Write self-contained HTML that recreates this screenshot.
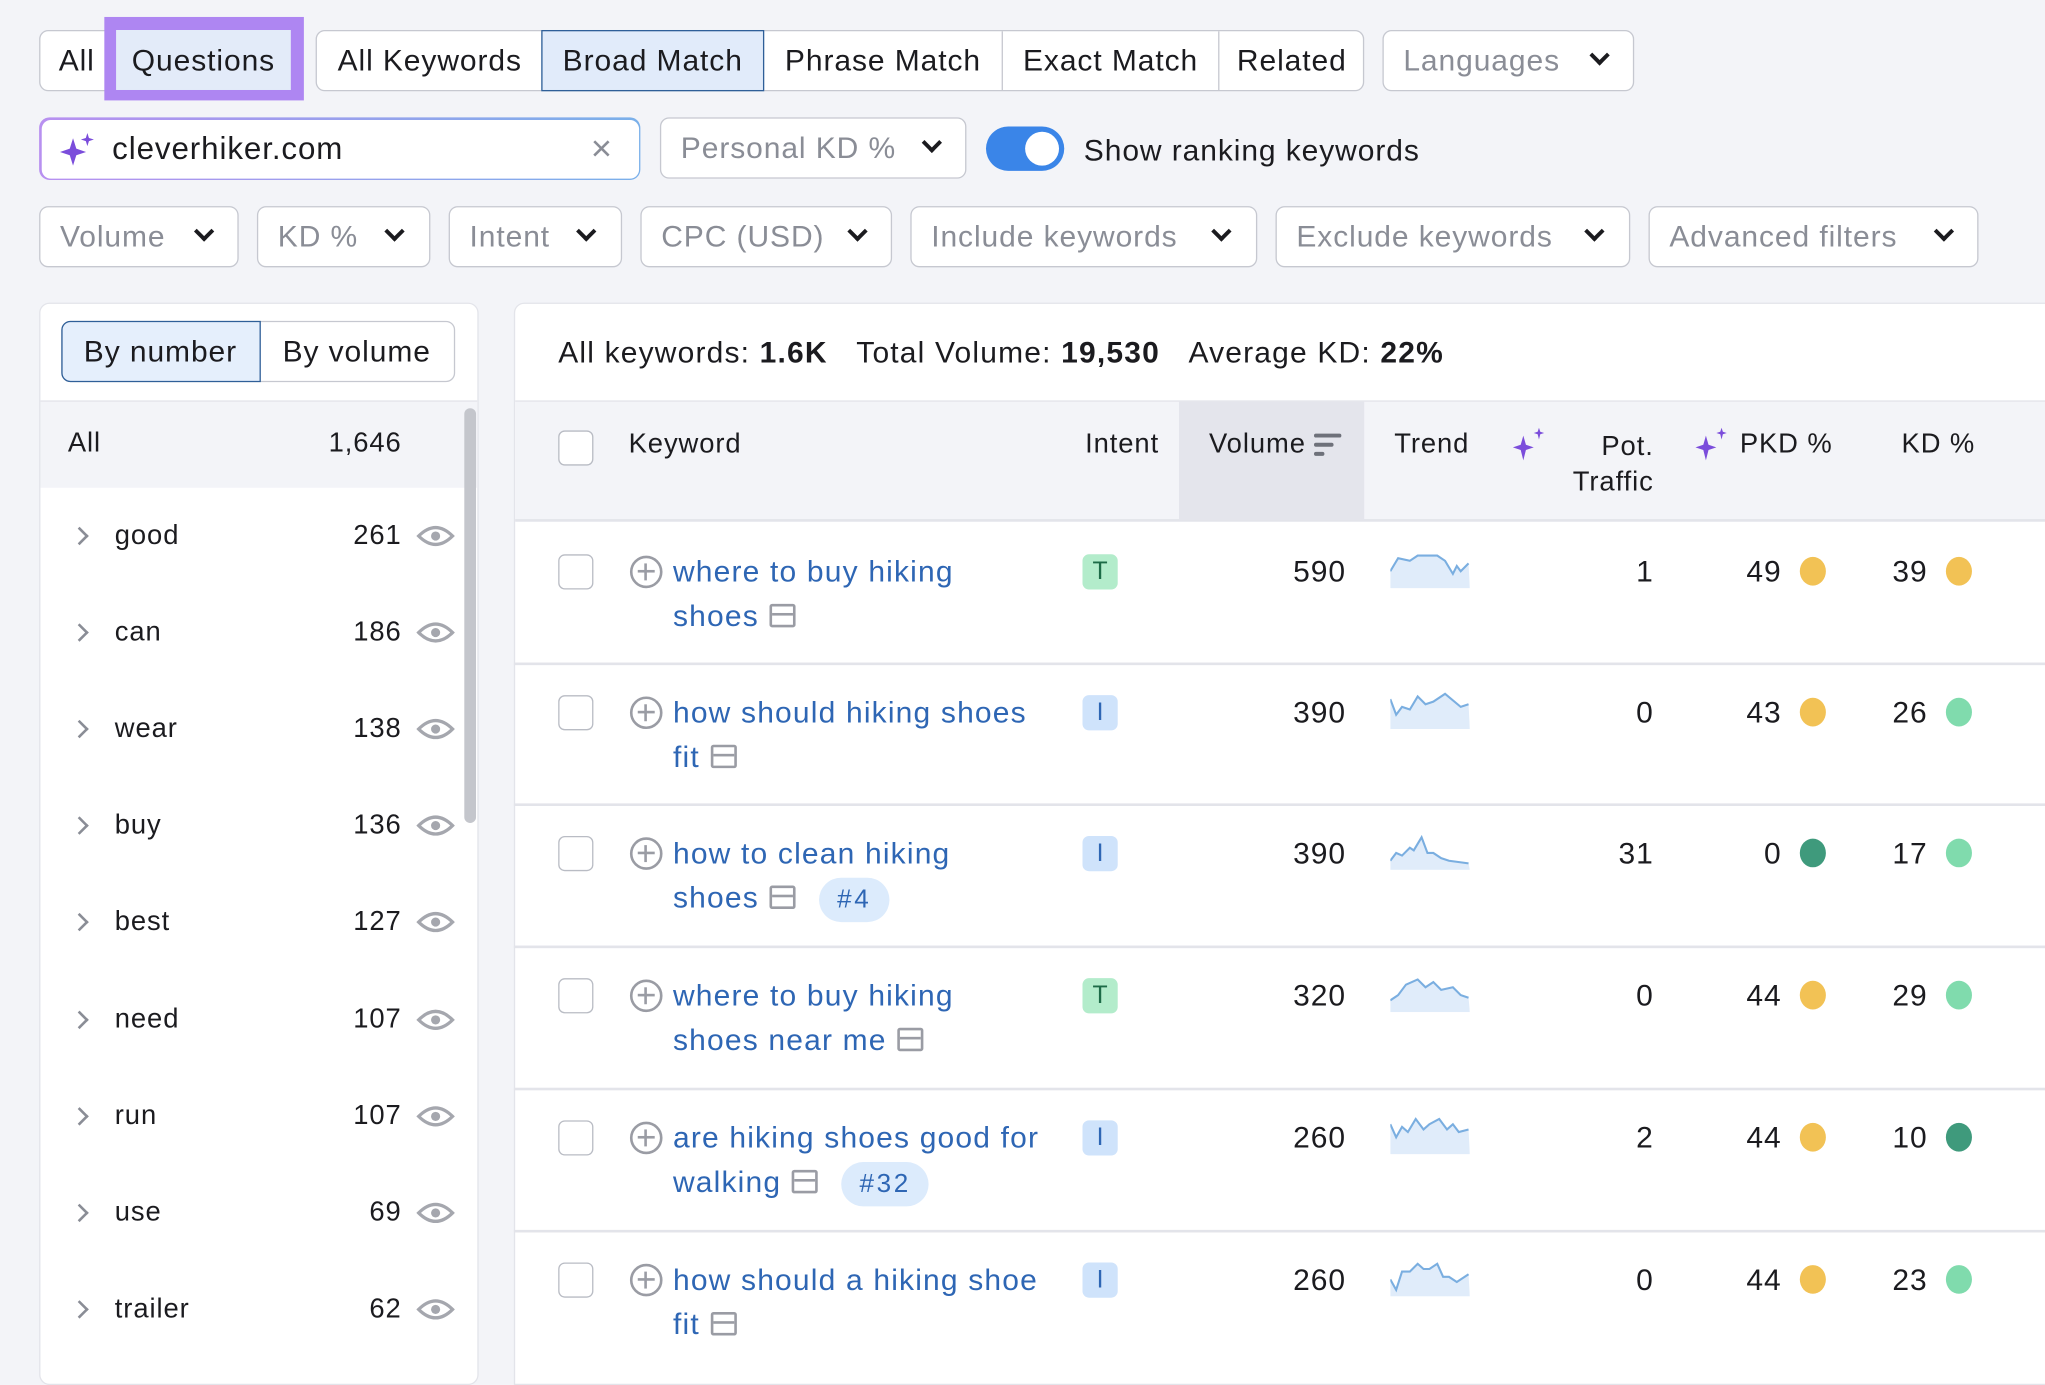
<!DOCTYPE html>
<html><head><meta charset="utf-8">
<style>
*{box-sizing:border-box;margin:0;padding:0}
html,body{width:2045px;height:1368px;overflow:hidden;background:#f3f4f8}
#w{position:absolute;left:0;top:0;width:1568px;height:1049px;transform:scale(1.30421);transform-origin:0 0;font-family:"Liberation Sans",sans-serif;font-size:23px;letter-spacing:0.7px;color:#1b1b1f}
.a{position:absolute}
.btn{position:absolute;height:47px;border:1.5px solid #c6c8d0;background:#fff;border-radius:7px;display:flex;align-items:center;padding-left:15px;white-space:nowrap}
.g{color:#8a8d96}
.chev{position:absolute;width:11px;height:11px;border-right:3px solid #1b1b1f;border-bottom:3px solid #1b1b1f;transform:rotate(45deg)}
.seg{position:absolute;top:0;height:100%;display:flex;align-items:center;justify-content:center;border-left:1.5px solid #c6c8d0}
.cb{position:absolute;width:27px;height:27px;border:1.5px solid #b9bcc4;border-radius:5px;background:#fff}
.kw{position:absolute;left:516px;color:#2e66b4;line-height:34px;width:320px;font-size:23px;letter-spacing:0.9px}
.r{position:absolute;text-align:right}
.dot{position:absolute;width:20px;height:22px;border-radius:50%}
.y{background:#f2c255}.lg{background:#80dbad}.dg{background:#3f9a7c}
.bd{position:absolute;left:830px;width:27px;height:27px;border-radius:5px;font-size:19px;display:flex;align-items:center;justify-content:center;letter-spacing:0}
.T{background:#b3eccb;color:#1d6b47}.I{background:#cfe3fb;color:#2e66b4}
.pill{display:inline-block;background:#dcebfc;border-radius:17px;padding:0 14px;font-size:20px;line-height:34px;margin-left:18px;letter-spacing:2px}
.ser{display:inline-block;width:20px;height:18px;border:2.5px solid #9a9ca4;border-radius:2px;vertical-align:-1px;margin-left:8px;position:relative}
.ser:after{content:"";position:absolute;left:0;right:0;top:5px;border-top:2.5px solid #9a9ca4}
.plus{position:absolute;left:483px;width:25px;height:25px;border:2.5px solid #9a9ca4;border-radius:50%}
.plus:before{content:"";position:absolute;left:4px;right:4px;top:9px;border-top:2.5px solid #9a9ca4}
.plus:after{content:"";position:absolute;top:4px;bottom:4px;left:9px;border-left:2.5px solid #9a9ca4}
.lc{position:absolute;width:10px;height:10px;border-right:2.5px solid #8a8d96;border-bottom:2.5px solid #8a8d96;transform:rotate(-45deg)}
.hl{position:absolute;left:394px;width:1174px;border-top:2px solid #e3e4ea}
.hd{font-size:21px}
</style></head><body><div id="w">

<div class="btn" style="left:30px;top:23px;width:202px;padding-left:14px">All</div>
<div class="a" style="left:80px;top:13px;width:153px;height:64px;background:#ae86f2"></div>
<div class="a" style="left:89px;top:23px;width:134px;height:46px;background:#e3ebf9;display:flex;align-items:center;justify-content:center;color:#1b1b1f">Questions</div>

<div class="btn" style="left:242px;top:23px;width:804px;padding:0">
 <div class="seg" style="left:0;width:173px;border:none">All Keywords</div>
 <div class="seg" style="left:172px;width:171px;background:#e1ebfa;border:1.5px solid #2f5f98;height:47px;top:-1.5px">Broad Match</div>
 <div class="seg" style="left:343px;width:182px;border:none">Phrase Match</div>
 <div class="seg" style="left:525px;width:166px">Exact Match</div>
 <div class="seg" style="left:691px;width:112px">Related</div>
</div>
<div class="btn g" style="left:1060px;top:23px;width:193px">Languages<span class="chev" style="left:160px;top:13px"></span></div>

<div class="a" style="left:30px;top:90px;width:461px;height:48px;border-radius:8px;background:linear-gradient(90deg,#b890f0,#7ab0ea);padding:1.5px"><div style="width:100%;height:100%;background:#fff;border-radius:7px"></div></div>
<svg class="a" style="left:44px;top:100px" width="30" height="30" viewBox="0 0 30 30"><path d="M12 6 L14.5 14 L22 16.5 L14.5 19 L12 27 L9.5 19 L2 16.5 L9.5 14Z" fill="#7b4ddb"/><path d="M23 2 L24.2 5.8 L28 7 L24.2 8.2 L23 12 L21.8 8.2 L18 7 L21.8 5.8Z" fill="#7b4ddb"/></svg>
<div class="a" style="left:86px;top:100px;line-height:30px;font-size:24px">cleverhiker.com</div>
<div class="a" style="left:453px;top:98px;font-size:28px;color:#8a8d96">×</div>
<div class="btn g" style="left:506px;top:90px;width:235px">Personal KD %<span class="chev" style="left:202px;top:13px"></span></div>
<div class="a" style="left:756px;top:97px;width:60px;height:34px;border-radius:17px;background:#3a85e8"><div style="position:absolute;right:4px;top:4px;width:26px;height:26px;border-radius:50%;background:#fff"></div></div>
<div class="a" style="left:831px;top:100px;line-height:30px">Show ranking keywords</div>

<div class="btn g" style="left:30px;top:158px;width:153px">Volume<span class="chev" style="left:120px;top:13px"></span></div>
<div class="btn g" style="left:197px;top:158px;width:133px">KD %<span class="chev" style="left:99px;top:13px"></span></div>
<div class="btn g" style="left:344px;top:158px;width:133px">Intent<span class="chev" style="left:99px;top:13px"></span></div>
<div class="btn g" style="left:491px;top:158px;width:193px">CPC (USD)<span class="chev" style="left:160px;top:13px"></span></div>
<div class="btn g" style="left:698px;top:158px;width:266px">Include keywords<span class="chev" style="left:232px;top:13px"></span></div>
<div class="btn g" style="left:978px;top:158px;width:272px">Exclude keywords<span class="chev" style="left:238px;top:13px"></span></div>
<div class="btn g" style="left:1264px;top:158px;width:253px">Advanced filters<span class="chev" style="left:220px;top:13px"></span></div>

<div class="a" style="left:30px;top:232px;width:337px;height:830px;background:#fff;border:1.5px solid #e3e4ea;border-radius:8px;overflow:hidden">
 <div class="a" style="left:0;top:74px;width:100%;height:67px;background:#f3f4f8;border-top:1.5px solid #e3e4ea"></div>
 <div class="a" style="left:325px;top:80px;width:9px;height:318px;border-radius:5px;background:#c4c6cc"></div>
</div>
<div class="btn" style="left:47px;top:246px;width:302px;padding:0">
 <div class="seg" style="left:-1.5px;top:-1.5px;width:153px;height:47px;background:#e5effc;border:1.5px solid #2f5f98;border-radius:7px 0 0 7px">By number</div>
 <div class="seg" style="left:151px;width:149px;border:none">By volume</div>
</div>
<div class="a hd" style="left:52px;top:328px">All</div>
<div class="r hd" style="left:200px;width:108px;top:328px">1,646</div>

<div id="list"></div>

<div class="a" style="left:394px;top:232px;width:1200px;height:830px;background:#fff;border:1.5px solid #e3e4ea;border-radius:8px 0 0 0"></div>
<div class="a" style="left:428px;top:257px;font-size:23px;letter-spacing:0.9px">All keywords: <b>1.6K</b>&nbsp;&nbsp;&nbsp;Total Volume: <b>19,530</b>&nbsp;&nbsp;&nbsp;Average KD: <b>22%</b></div>
<div class="a" style="left:395px;top:307px;width:1173px;height:93px;background:#f3f4f8;border-top:1.5px solid #e3e4ea;border-bottom:2px solid #e3e4ea"></div>
<div class="a" style="left:904px;top:308px;width:142px;height:91px;background:#e4e5ec"></div>
<div class="cb" style="left:428px;top:330px"></div>
<div class="a hd" style="left:482px;top:329px">Keyword</div>
<div class="a hd" style="left:832px;top:329px">Intent</div>
<div class="a hd" style="left:927px;top:329px">Volume</div>
<svg class="a" style="left:1007px;top:331px" width="22" height="20"><path d="M2 3H20M2 10H14M2 17H7" stroke="#6e717a" stroke-width="3" stroke-linecap="round"/></svg>
<div class="a hd" style="left:1069px;top:329px">Trend</div>
<svg class="a" style="left:1158px;top:326px" width="30" height="30" viewBox="0 0 30 30"><path d="M10 8 L12 15 L18 17 L12 19 L10 27 L8 19 L2 17 L8 15Z" fill="#7b4ddb"/><path d="M22 2 L23 5 L26 6 L23 7 L22 11 L21 7 L18 6 L21 5Z" fill="#7b4ddb"/></svg>
<div class="r hd" style="left:1170px;width:98px;top:329px;line-height:27px">Pot.<br>Traffic</div>
<svg class="a" style="left:1298px;top:326px" width="30" height="30" viewBox="0 0 30 30"><path d="M10 8 L12 15 L18 17 L12 19 L10 27 L8 19 L2 17 L8 15Z" fill="#7b4ddb"/><path d="M22 2 L23 5 L26 6 L23 7 L22 11 L21 7 L18 6 L21 5Z" fill="#7b4ddb"/></svg>
<div class="a hd" style="left:1334px;top:329px">PKD %</div>
<div class="a hd" style="left:1458px;top:329px">KD %</div>

<div id="rows"></div>
</div>
<script>
var L=[["good",261,411],["can",186,485],["wear",138,559],["buy",136,633],["best",127,707],["need",107,782],["run",107,856],["use",69,930],["trailer",62,1004]],h="";
L.forEach(function(r){var y=r[2];
h+='<div class="lc" style="left:56px;top:'+(y-5)+'px"></div><div class="a" style="left:88px;top:'+(y-12)+'px;font-size:21px">'+r[0]+'</div><div class="r" style="left:200px;width:108px;top:'+(y-12)+'px;font-size:21px">'+r[1]+'</div>'+
'<svg class="a" style="left:319px;top:'+(y-12)+'px" width="30" height="24"><path d="M2 12 Q15 -1 28 12 Q15 25 2 12Z" fill="none" stroke="#a5a7ae" stroke-width="2.5"/><circle cx="15" cy="12" r="3.5" fill="#a5a7ae"/></svg>';});
document.getElementById("list").outerHTML=h;
var R=[
[400,"where to buy hiking<br>shoes<i class=ser></i>","T",590,1,49,"y",39,"y","0,14 4,4 10,6 14,2 24,2 28,6 32,16 34,10 36,14 40,8"],
[508,"how should hiking shoes<br>fit<i class=ser></i>","I",390,0,43,"y",26,"lg","0,4 3,16 6,10 10,12 14,2 18,8 22,6 28,0 36,10 40,8"],
[616,"how to clean hiking<br>shoes<i class=ser></i><span class=pill>#4</span>","I",390,31,0,"dg",17,"lg","0,20 3,14 6,16 10,10 12,12 16,2 19,14 22,14 26,18 30,20 40,22"],
[725,"where to buy hiking<br>shoes near me<i class=ser></i>","T",320,0,44,"y",29,"lg","0,18 4,14 8,6 14,2 18,8 22,4 26,10 32,8 36,14 40,16"],
[834,"are hiking shoes good for<br>walking<i class=ser></i><span class=pill>#32</span>","I",260,2,44,"y",10,"dg","0,4 3,14 6,6 9,10 13,0 17,8 20,4 25,0 29,8 32,4 35,10 40,8"],
[943,"how should a hiking shoe<br>fit<i class=ser></i>","I",260,0,44,"y",23,"lg","0,14 3,22 6,8 10,8 14,2 17,6 20,6 24,2 27,12 30,12 34,16 40,10"]];
h="";
R.forEach(function(r,i){var t=r[0],c=t+38;
if(i>0)h+='<div class="hl" style="top:'+t+'px"></div>';
h+='<div class="cb" style="left:428px;top:'+(c-13)+'px"></div><div class="plus" style="top:'+(c-12)+'px"></div>';
h+='<div class="kw" style="top:'+(c-17)+'px">'+r[1]+'</div>';
h+='<div class="bd '+r[2]+'" style="top:'+(c-13)+'px">'+r[2]+'</div>';
h+='<div class="r" style="left:930px;width:102px;top:'+(c-13)+'px">'+r[3]+'</div>';
var pts=r[9].split(" ").map(function(p){var q=p.split(",");return (q[0]*1.5)+","+(2+q[1]*1)}).join(" ");
h+='<svg class="a" style="left:1066px;top:'+(c-16)+'px" width="61" height="29"><polygon points="0,29 '+pts+' 61,29" fill="#e0ecfa"/><polyline points="'+pts+'" fill="none" stroke="#7aaee0" stroke-width="1.6"/></svg>';
h+='<div class="r" style="left:1180px;width:88px;top:'+(c-13)+'px">'+r[4]+'</div>';
h+='<div class="r" style="left:1300px;width:66px;top:'+(c-13)+'px">'+r[5]+'</div><div class="dot '+r[6]+'" style="left:1380px;top:'+(c-11)+'px"></div>';
h+='<div class="r" style="left:1410px;width:68px;top:'+(c-13)+'px">'+r[7]+'</div><div class="dot '+r[8]+'" style="left:1492px;top:'+(c-11)+'px"></div>';
});
document.getElementById("rows").outerHTML=h;
</script>
</body></html>
